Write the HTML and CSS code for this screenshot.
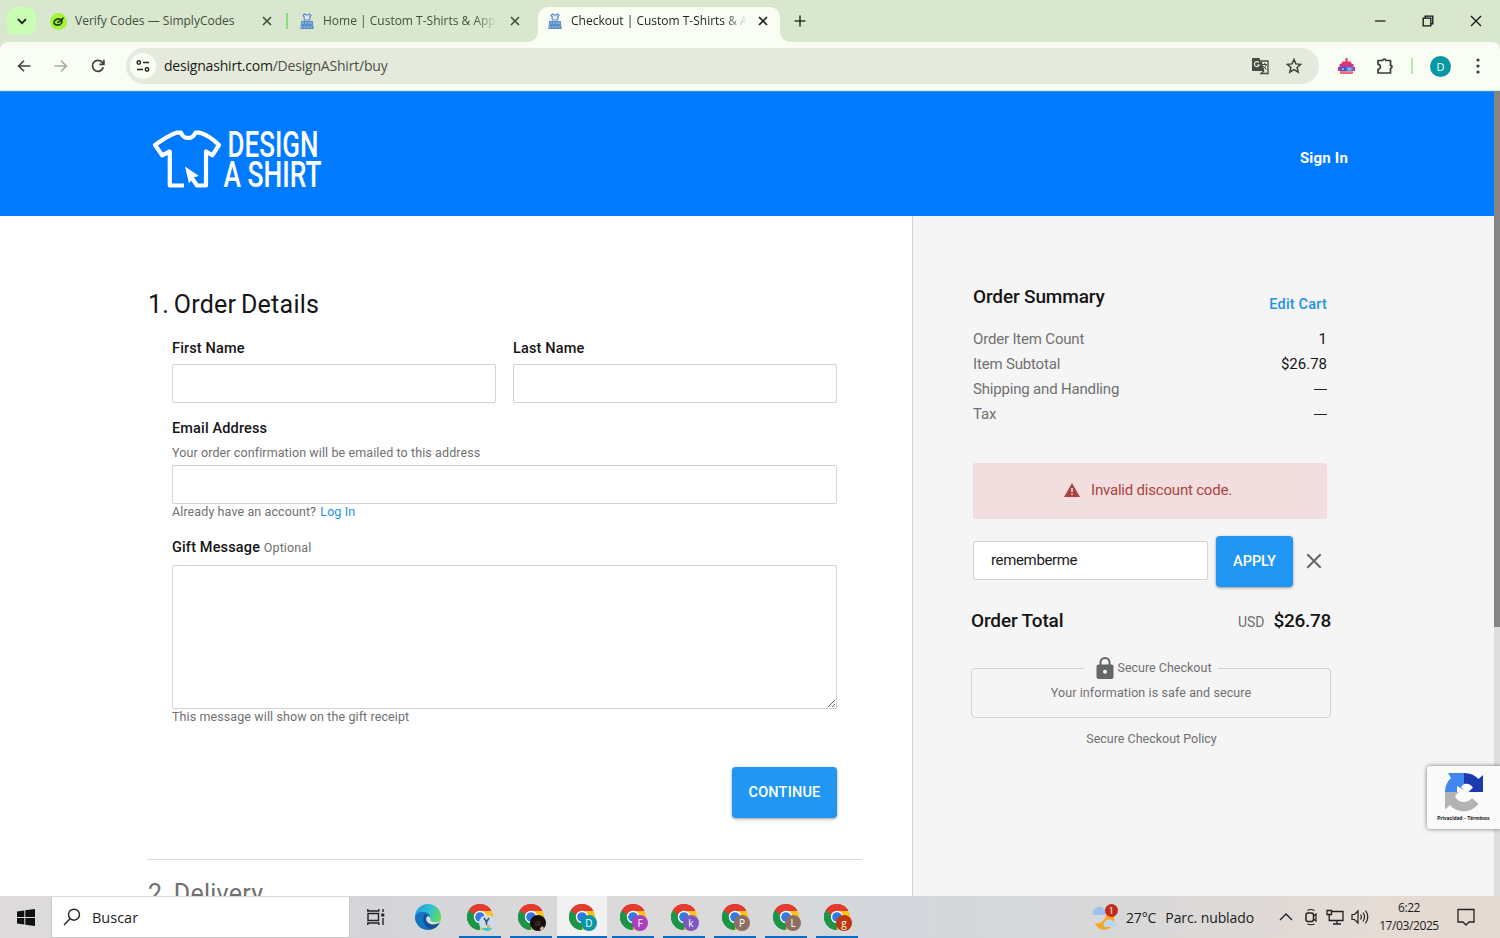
FILE: index.html
```html
<!DOCTYPE html>
<html lang="en">
<head>
    <meta charset="UTF-8">
    <meta name="viewport" content="width=device-width, initial-scale=1.0">
    <title>Checkout | Custom T-Shirts &amp; Apparel</title>
    <link rel="stylesheet" href="styles.css">
</head>
<body>
    <!-- Shared icons -->
    <svg class="sprite" aria-hidden="true">
        <symbol id="close" viewBox="0 0 10 10"><path d="M1 1l8 8M9 1L1 9" fill="none" stroke="currentColor" stroke-width="1.7"/></symbol>
        <symbol id="shirt-fav" viewBox="0 0 14 16">
            <path d="M4.500 1L3 2.500l1.200 1.300V7h5.600V3.800L11 2.500 9.500 1 8 1.800H6z" fill="#dce9ef" stroke="#5b8fc9" stroke-width="1.200"/>
            <path d="M1 8h12v3l.8 5H.2L1 11z" fill="#5b8fc9"/>
            <path d="M3 9v2M6 9v2M9 9v2M11 9v2M2 13v2M5 13v2M8 13v2M11 13v2" stroke="#b9d2e6" stroke-width=".8"/>
        </symbol>
        <symbol id="chrome" viewBox="0 0 26 26">
            <path d="M13 13L1.740 6.500A13 13 0 0 1 24.260 6.500z" fill="#e33b2e"/>
            <path d="M13 13L24.260 6.500A13 13 0 0 1 13 26z" fill="#fcc31e"/>
            <path d="M13 13V26A13 13 0 0 1 1.740 6.500z" fill="#1e9447"/>
            <path d="M13 7h11.500L18 15z" fill="#fcc31e"/>
            <path d="M1.740 6.500L7.800 16l5-9z" fill="#1e9447"/>
            <path d="M1.740 6.500A13 13 0 0 1 24.300 6.700H13a6 6 0 0 0-5.500 4z" fill="#e33b2e"/>
            <path d="M1.740 6.500L7.400 15.500A6 6 0 0 0 15 18.500L11.500 25.900A13 13 0 0 1 1.740 6.500z" fill="#1e9447"/>
            <circle cx="13" cy="13" r="6.200" fill="#fff"/>
            <circle cx="13" cy="13" r="4.800" fill="#3478e5"/>
        </symbol>
    </svg>

    <!-- Browser tabs -->
    <div class="tab-strip">
        <div class="tab-search"><svg width="10" height="7" viewBox="0 0 10 7"><path d="M1 1.200l4 4 4-4" fill="none" stroke="#15240f" stroke-width="1.900"/></svg></div>
        <div class="tab tab-first">
            <svg class="favicon" width="17" height="17" viewBox="0 0 17 17"><circle cx="8.500" cy="8.500" r="8.500" fill="#a5f23a"/><ellipse cx="8" cy="9" rx="4" ry="3" transform="rotate(-15 8 9)" fill="none" stroke="#1c3b12" stroke-width="1.700"/><path d="M7 9.500q3-.5 6.500-5" fill="none" stroke="#1c3b12" stroke-width="1.700"/></svg>
            <span class="tab-title">Verify Codes — SimplyCodes</span>
            <svg class="tab-close" width="10" height="10"><use href="#close"/></svg>
        </div>
        <div class="tab tab-second">
            <svg class="favicon" width="14" height="16"><use href="#shirt-fav"/></svg>
            <span class="tab-title fade">Home | Custom T-Shirts &amp; App</span>
            <svg class="tab-close" width="10" height="10"><use href="#close"/></svg>
        </div>
        <div class="tab tab-active">
            <svg class="favicon" width="14" height="16"><use href="#shirt-fav"/></svg>
            <span class="tab-title fade">Checkout | Custom T-Shirts &amp; A</span>
            <svg class="tab-close" width="10" height="10"><use href="#close"/></svg>
        </div>
        <svg class="new-tab" width="12" height="12" viewBox="0 0 12 12"><path d="M6 .5v11M.5 6h11" stroke="#2b3b27" stroke-width="1.600"/></svg>
        <div class="window-buttons">
            <svg width="12" height="12" viewBox="0 0 12 12"><path d="M1 6h10.500" stroke="#111" stroke-width="1.200"/></svg>
            <svg width="12" height="12" viewBox="0 0 12 12"><path d="M1.200 3.200h7.600v7.600H1.200zM3.200 3V1.200h7.600v7.600H9" fill="none" stroke="#111" stroke-width="1.300"/></svg>
            <svg width="12" height="12" viewBox="0 0 12 12"><path d="M1 1l10 10M11 1L1 11" stroke="#111" stroke-width="1.200"/></svg>
        </div>
    </div>

    <!-- Toolbar -->
    <div class="toolbar">
        <div class="nav-buttons">
            <svg width="14" height="12" viewBox="0 0 14 12"><path d="M13.500 6H1.500M7 .7L1.600 6 7 11.300" fill="none" stroke="#3b4538" stroke-width="1.600"/></svg>
            <svg width="14" height="12" viewBox="0 0 14 12"><path d="M.5 6h12M7 .7L12.400 6 7 11.300" fill="none" stroke="#a6aca2" stroke-width="1.600"/></svg>
            <svg width="14" height="14" viewBox="0 0 14 14"><path d="M12.300 8.300A5.500 5.500 0 1 1 11.300 3.400L12.500 5M12.900 .8v4.500H8.400" fill="none" stroke="#3b4538" stroke-width="1.700"/></svg>
        </div>
        <div class="address-bar">
            <span class="site-info"><svg width="14" height="14" viewBox="0 0 14 14"><path d="M7 3.500h6M1 10.500h6" stroke="#222b20" stroke-width="1.600"/><circle cx="2.800" cy="3.500" r="1.700" fill="none" stroke="#222b20" stroke-width="1.500"/><circle cx="11" cy="10.500" r="1.700" fill="none" stroke="#222b20" stroke-width="1.500"/></svg></span>
            <span class="url"><b>designashirt.com</b>/DesignAShirt/buy</span>
            <svg class="translate" width="18" height="18" viewBox="0 0 18 18"><path d="M1 1h7.500l4.200 13H1z" fill="#454d43"/><path d="M10 4h7v12.500h-7l2.700-2.500z" fill="none" stroke="#454d43" stroke-width="1.300"/><path d="M11 7.500h5M13.500 6v1.500M15 8c-.5 2-1.500 3-3 4M12.200 9l3.500 4" fill="none" stroke="#454d43"/><path d="M7.800 5.500A2.500 2.500 0 1 0 8.200 8H6" fill="none" stroke="#e5eadd" stroke-width="1.200"/></svg>
            <svg class="star" width="16" height="16" viewBox="0 0 16 16"><path d="M8 1.500l1.900 4.400 4.800.4-3.600 3.200 1.100 4.700L8 11.700l-4.200 2.500 1.100-4.700L1.300 6.300l4.800-.4z" fill="none" stroke="#3b4538" stroke-width="1.500"/></svg>
        </div>
        <svg class="ext-bot" width="17" height="17" viewBox="0 0 17 17"><path d="M8.500 0v4" stroke="#e8306b" stroke-width="2"/><path d="M3 6l1.500-2.500h8L14 6z" fill="#e8306b"/><path d="M1.500 6h14v3H17v4H0V9h1.500z" fill="#c4388c"/><path d="M2.500 9h6v4.500h-6z" fill="#3558d0"/><path d="M8.500 9h6v4.500h-6z" fill="#5a8fe8"/><path d="M2 13.500h13V16H2z" fill="#ee6a6f"/><path d="M4 11h2M10.500 11h2" stroke="#fff" stroke-width="1.200"/></svg>
        <svg class="ext-puzzle" width="18" height="18" viewBox="0 0 18 18"><path d="M2 3.500h4.800c0-2 3-2 3 0h4.700v4.800c2 0 2 3 0 3v4.700H2v-3.700c3.200-.3 3.200-4.700 0-5z" fill="none" stroke="#34402f" stroke-width="1.700" stroke-linejoin="round"/></svg>
        <span class="toolbar-divider"></span>
        <span class="profile">D</span>
        <svg class="menu-dots" width="4" height="16" viewBox="0 0 4 16"><g fill="#34402f"><circle cx="2" cy="2" r="1.600"/><circle cx="2" cy="8" r="1.600"/><circle cx="2" cy="14" r="1.600"/></g></svg>
    </div>

    <!-- Page -->
    <div class="page">
        <header class="site-header">
            <svg class="logo" width="170" height="62" viewBox="0 0 170 62">
                <path d="M32 57.500H17.800V23.500L10.200 27.300 3 17C10 12 18 6.500 24.500 4.700h4.500c2.700 7 11.700 7 14.400 0H48C54.500 6.500 61.500 11.500 67 17L60.300 27.300 54 23.500V57.500H45L37 46" fill="none" stroke="#fff" stroke-width="4.200" stroke-linejoin="round"/>
                <path d="M33 38.500l14 9.500-6 1.500-4 6z" fill="#fff"/>
                <text x="75.500" y="28.700" font-size="36" textLength="91" lengthAdjust="spacingAndGlyphs">DESIGN</text>
                <text x="71.500" y="59" font-size="36" textLength="98" lengthAdjust="spacingAndGlyphs">A SHIRT</text>
            </svg>
            <a class="sign-in">Sign In</a>
        </header>

        <div class="columns">
            <main class="checkout">
                <h2>1. Order Details</h2>
                <div class="form">
                    <div class="name-row">
                        <div>
                            <label for="first">First Name</label>
                            <input type="text" id="first">
                        </div>
                        <div>
                            <label for="last">Last Name</label>
                            <input type="text" id="last">
                        </div>
                    </div>
                    <label class="email-label" for="email">Email Address</label>
                    <p class="help help-above">Your order confirmation will be emailed to this address</p>
                    <input type="text" id="email">
                    <p class="help help-below">Already have an account? <a>Log In</a></p>
                    <label class="gift-label" for="gift">Gift Message <small>Optional</small></label>
                    <textarea id="gift"></textarea>
                    <p class="help help-below">This message will show on the gift receipt</p>
                    <button class="btn btn-continue">CONTINUE</button>
                </div>
                <hr>
                <h2 class="next-step">2. Delivery</h2>
            </main>

            <aside class="summary">
                <div class="summary-head">
                    <h3>Order Summary</h3>
                    <a>Edit Cart</a>
                </div>
                <dl>
                    <div><dt>Order Item Count</dt><dd>1</dd></div>
                    <div><dt>Item Subtotal</dt><dd>$26.78</dd></div>
                    <div><dt>Shipping and Handling</dt><dd><i class="dash"></i></dd></div>
                    <div><dt>Tax</dt><dd><i class="dash"></i></dd></div>
                </dl>
                <div class="alert">
                    <svg width="16" height="14" viewBox="0 0 16 14"><path d="M8 0l8 14H0z" fill="#a94442"/><path d="M8 5v4M8 10.500v1.500" stroke="#f2dede" stroke-width="1.600"/></svg>
                    <span>Invalid discount code.</span>
                </div>
                <div class="discount">
                    <input type="text" value="rememberme" aria-label="Discount code">
                    <button class="btn btn-apply">APPLY</button>
                    <svg width="16" height="16" viewBox="0 0 16 16"><path d="M1.300 1.300l13.400 13.400M14.700 1.300L1.300 14.700" stroke="#666" stroke-width="2"/></svg>
                </div>
                <div class="total">
                    <h3>Order Total</h3>
                    <span class="currency">USD</span>
                    <strong>$26.78</strong>
                </div>
                <div class="secure">
                    <div class="secure-title">
                        <svg width="18" height="22" viewBox="0 0 18 22"><path d="M4.500 9V5.500a4.500 4.500 0 0 1 9 0V9" fill="none" stroke="#666" stroke-width="2"/><rect x=".5" y="7.500" width="17" height="14.500" rx="2" fill="#666"/><circle cx="9" cy="14.700" r="2" fill="#f5f5f5"/></svg>
                        <span>Secure Checkout</span>
                    </div>
                    <p>Your information is safe and secure</p>
                </div>
                <a class="policy">Secure Checkout Policy</a>
            </aside>
        </div>

        <div class="scrollbar"><span></span></div>

        <div class="recaptcha">
            <svg width="40" height="40" viewBox="0 0 40 40">
                <path d="M1 20A19 19 0 0 1 7 6L4 1H20V12L17 15L20 18L13 14V20z" fill="#4286f0"/>
                <path d="M20 1C26 1 31 3 34.500 7L39 3V20H24.500L29 15.500C27 12.500 24 11 20 12z" fill="#1b3aad"/>
                <path d="M1 20H14.500L11 24.500C14 31 23 32 28 26L34.500 32C26 42 13 41 6 33L1 37.500z" fill="#b3b3b3"/>
            </svg>
            <span>Privacidad - Términos</span>
        </div>
    </div>

    <!-- Taskbar -->
    <div class="taskbar">
        <div class="start"><svg width="18" height="17" viewBox="0 0 18 17"><path d="M0 2.400l7.300-1V8H0zM8.300 1.200L18 0v8H8.300zM0 9h7.300v6.600l-7.300-1zM8.300 9H18v8l-9.700-1.300z" fill="#111"/></svg></div>
        <div class="search">
            <svg width="18" height="18" viewBox="0 0 18 18"><circle cx="11" cy="6.700" r="5.500" fill="none" stroke="#222" stroke-width="1.400"/><path d="M7 10.800L1 17" stroke="#222" stroke-width="1.400"/></svg>
            <span>Buscar</span>
        </div>
        <div class="task-view"><svg width="18" height="16" viewBox="0 0 18 16"><path d="M1 4.500h10.500v7H1zM.8 0v2h11V0M.8 16v-2h11v2M16 0v3M16 9v7" fill="none" stroke="#222" stroke-width="1.400"/><path d="M14.300 4.500h3v3h-3z" fill="#222"/></svg></div>
        <div class="apps">
            <div class="app edge">
                <svg width="26" height="26" viewBox="0 0 26 26">
                    <defs>
                        <linearGradient id="edge-top" x1="0" x2="1" y1="0" y2=".4"><stop offset="0" stop-color="#2295dc"/><stop offset=".55" stop-color="#2cbfd5"/><stop offset="1" stop-color="#62d85b"/></linearGradient>
                    </defs>
                    <circle cx="13" cy="13" r="13" fill="url(#edge-top)"/>
                    <path d="M0 13C1 8.500 5.500 7.500 9 8C13 8.600 15.500 11 15.300 14C13 10.500 9.500 14.500 12 18C14.500 21.500 20 21.500 24.500 19A13 13 0 0 1 0 13z" fill="#1673c0"/>
                    <path d="M9.500 10.500C6.500 17 10 24.500 17 25.300A13 13 0 0 0 24.500 19C20 21.500 14.500 21 12 18C10 15.500 10.500 12.500 13 11.800C12 10.500 10.500 10 9.500 10.500z" fill="#164f97"/>
                    <path d="M13 12C10.500 13.500 11 17 13.500 18.700C17 21 21 20.500 24.500 18.500L25 17.300C21 18.800 17.500 18.300 15.500 16.500C16 14.500 15 12.500 13 12z" fill="#dedcdb"/>
                </svg>
            </div>
            <div class="app open"><svg width="26" height="26"><use href="#chrome"/></svg><span class="badge photo-light"><svg width="16" height="16" viewBox="0 0 16 16"><path d="M5 3l2.500 4L10 3M7.500 7v3" fill="none" stroke="#35516b" stroke-width="1.500"/><path d="M2 13h11l-2 3H5z" fill="#43c7c6"/><path d="M8 10h3v3H8z" fill="#d6b56c"/></svg></span></div>
            <div class="app open"><svg width="26" height="26"><use href="#chrome"/></svg><span class="badge photo-dark"><svg width="16" height="16" viewBox="0 0 16 16"><path d="M5 7q3-3 6 0v4H5z" fill="#3a211b"/><path d="M10 13l3-2 1 3-3 2z" fill="#e8bba8"/></svg></span></div>
            <div class="app open current"><svg width="26" height="26"><use href="#chrome"/></svg><span class="badge teal">D</span></div>
            <div class="app open"><svg width="26" height="26"><use href="#chrome"/></svg><span class="badge magenta">F</span></div>
            <div class="app open"><svg width="26" height="26"><use href="#chrome"/></svg><span class="badge violet">k</span></div>
            <div class="app open"><svg width="26" height="26"><use href="#chrome"/></svg><span class="badge brown">P</span></div>
            <div class="app open"><svg width="26" height="26"><use href="#chrome"/></svg><span class="badge brown">L</span></div>
            <div class="app open"><svg width="26" height="26"><use href="#chrome"/></svg><span class="badge rust">g</span></div>
        </div>
        <div class="tray">
            <div class="weather">
                <svg width="26" height="25" viewBox="0 0 26 25"><path d="M15 5a10 10 0 1 1-12 13c5 2 12-3 12-13z" fill="#f5a623"/><path d="M2 10a3 3 0 0 1 1-5.500 5 5 0 0 1 9-.5 3 3 0 0 1 1 6z" fill="#9fc1ee"/><path d="M13 22a3 3 0 0 1 .5-5.500 5 5 0 0 1 8.500.5 2.600 2.600 0 0 1 1 5z" fill="#bcd6f5"/></svg>
                <span class="alert-count">1</span>
            </div>
            <span class="temp">27°C</span>
            <span class="condition">Parc. nublado</span>
            <svg class="chevron" width="14" height="8" viewBox="0 0 14 8"><path d="M1 7l6-6 6 6" fill="none" stroke="#222" stroke-width="1.400"/></svg>
            <svg class="meet" width="12" height="18" viewBox="0 0 12 18"><rect x="1" y="5" width="7.500" height="8.500" rx="2" fill="none" stroke="#222" stroke-width="1.500"/><path d="M8.500 8l2.500-2v7l-2.500-2M2.500 2.500q3.500-2 7 0M2.500 16q3.500 1.500 7 0" fill="none" stroke="#222" stroke-width="1.200"/></svg>
            <svg class="network" width="18" height="16" viewBox="0 0 18 16"><path d="M6 2.500h11v9H5.500M11 11.500V15M7 15h8" fill="none" stroke="#222" stroke-width="1.300"/><path d="M1 1.500h4.500v4H1zM3.200 5.500V11.500H6" fill="none" stroke="#222" stroke-width="1.300"/></svg>
            <svg class="volume" width="18" height="16" viewBox="0 0 18 16"><path d="M1 5.500h2.500L7 2v12l-3.500-3.500H1zM9.500 5.500q1.800 2.500 0 5M12 3.500q3 4.500 0 9M14.500 1.500q4.500 6.500 0 13" fill="none" stroke="#222" stroke-width="1.200"/></svg>
            <div class="clock"><span>6:22</span><span>17/03/2025</span></div>
            <svg class="notifications" width="18" height="18" viewBox="0 0 18 18"><path d="M1 1.500h16v12.500h-5L9 17l-3-3H1z" fill="none" stroke="#222" stroke-width="1.300"/></svg>
        </div>
    </div>
</body>
</html>
```

FILE: styles.css
```css
:root {
    --strip: #d8e7ce;
    --toolbar: #f9fdf4;
    --brand: #007bff;
    --accent: #2196f3;
    --link: #1e92ea;
    --grey-text: #707070;
    --border: #d3d3d3;
    --panel: #f5f5f5;
    --ui-font: "Open Sans", "Noto Sans", sans-serif;
}

* {
    box-sizing: border-box;
}

body {
    margin: 0;
    height: 938px;
    overflow: hidden;
    display: flex;
    flex-direction: column;
    font-family: Roboto, sans-serif;
    color: #151515;
    background: #fff;
}

svg {
    display: block;
    flex: none;
}

h2, h3, p, dl, dd {
    margin: 0;
}

.sprite {
    position: absolute;
    width: 0;
    height: 0;
}

/* Browser tabs */
.tab-strip {
    height: 42px;
    flex: none;
    display: flex;
    align-items: center;
    padding-left: 7px;
    background: var(--strip);
    font-family: var(--ui-font);
    font-size: 12px;
    color: #42503d;
}

.tab-search {
    width: 29px;
    height: 29px;
    border-radius: 9px;
    background: #c8ffb4;
    display: flex;
    align-items: center;
    justify-content: center;
}

.tab {
    display: flex;
    align-items: center;
    height: 34px;
    white-space: nowrap;
}

.tab-title {
    line-height: 34px;
}

.tab-close {
    margin-left: auto;
}

.fade {
    -webkit-mask-image: linear-gradient(to right, #000 87%, transparent);
    mask-image: linear-gradient(to right, #000 87%, transparent);
}

.tab-first {
    width: 222px;
    margin-left: 14px;
    gap: 8px;
}

.tab-second {
    width: 234px;
    margin-left: 14px;
    padding-left: 14px;
    background: linear-gradient(#8fdc87, #8fdc87) left center / 2px 16px no-repeat;
}

.tab-second .tab-title {
    width: 174px;
    margin-left: 9px;
}

.tab-active {
    position: relative;
    width: 242px;
    height: 35px;
    align-self: flex-end;
    margin-left: 18px;
    padding: 0 12px 7px 10px;
    border-radius: 10px 10px 0 0;
    background: var(--toolbar);
    color: #1c241a;
}

.tab-active::before,
.tab-active::after {
    content: "";
    position: absolute;
    bottom: 0;
    width: 10px;
    height: 10px;
}

.tab-active::before {
    left: -10px;
    background: radial-gradient(circle at 0 0, transparent 9.500px, var(--toolbar) 10px);
}

.tab-active::after {
    right: -10px;
    background: radial-gradient(circle at 100% 0, transparent 9.500px, var(--toolbar) 10px);
}

.tab-active .tab-title {
    width: 176px;
    margin-left: 9px;
}

.new-tab {
    margin-left: 14px;
}

.window-buttons {
    margin-left: auto;
    margin-right: 18px;
    display: flex;
    gap: 36px;
}

/* Toolbar */
.toolbar {
    height: 49px;
    flex: none;
    display: flex;
    align-items: center;
    padding: 0 20px 0 17px;
    background: var(--toolbar);
    border-bottom: 1px solid #c6eaf5;
    font-family: var(--ui-font);
    box-shadow: 0 -8px 0 var(--strip);
    border-radius: 8px 8px 0 0;
}

.nav-buttons {
    display: flex;
    align-items: center;
    gap: 23px;
}

.address-bar {
    width: 1193px;
    height: 36px;
    margin-left: 21px;
    padding: 0 17px 0 4px;
    border-radius: 18px;
    background: #e5eadd;
    display: flex;
    align-items: center;
}

.site-info {
    width: 26px;
    height: 26px;
    border-radius: 50%;
    background: #f9fdf4;
    display: flex;
    align-items: center;
    justify-content: center;
}

.url {
    margin-left: 8px;
    padding-bottom: 1px;
    font-size: 14px;
    letter-spacing: -0.2px;
    color: #4b5148;
}

.url b {
    font-weight: 400;
    color: #171d15;
}

.translate {
    margin-left: auto;
}

.star {
    margin-left: 17px;
}

.ext-bot {
    margin-left: 19px;
}

.ext-puzzle {
    margin-left: 21px;
}

.toolbar-divider {
    width: 2px;
    height: 16px;
    margin-left: 17px;
    background: #b9eaaa;
}

.profile {
    width: 21px;
    height: 21px;
    margin-left: 17px;
    border-radius: 50%;
    background: #0797a5;
    color: #fff;
    font-size: 11px;
    line-height: 21px;
    text-align: center;
}

.menu-dots {
    margin-left: auto;
}

/* Page */
.page {
    position: relative;
    height: 805px;
    flex: none;
    overflow: hidden;
}

.site-header {
    height: 125px;
    display: flex;
    align-items: center;
    justify-content: space-between;
    padding: 7px 152px 0 152px;
    background: var(--brand);
    border-top: 1px solid #3f8fd9;
}

.logo {
    margin-top: 2px;
    overflow: visible;
}

.logo text {
    fill: #fff;
    font-family: Roboto, sans-serif;
    font-weight: 500;
}

.sign-in {
    color: #fff;
    font-size: 15px;
    font-weight: 700;
    letter-spacing: 0.2px;
}

.columns {
    display: flex;
    height: 680px;
}

.checkout {
    width: 913px;
    padding: 74px 50px 0 147px;
    border-right: 1px solid var(--border);
}

.checkout h2 {
    font-size: 25px;
    font-weight: 400;
    line-height: 30px;
    letter-spacing: 0.25px;
    word-spacing: -1.800px;
    padding-left: 1px;
}

.form {
    width: 690px;
    padding: 18px 0 0 25px;
    display: flex;
    flex-direction: column;
}

.name-row {
    display: grid;
    grid-template-columns: 1fr 1fr;
    gap: 17px;
}

label {
    display: block;
    font-size: 14.500px;
    font-weight: 500;
    line-height: 22px;
    letter-spacing: 0.15px;
}

label small {
    font-size: 12.500px;
    font-weight: 400;
    letter-spacing: 0.1px;
    color: var(--grey-text);
}

input,
textarea {
    display: block;
    width: 100%;
    height: 39px;
    border: 1px solid var(--border);
    border-radius: 2px;
    background: #fff;
    font: 15px Roboto, sans-serif;
    color: #222;
}

.name-row input {
    margin-top: 4px;
}

.email-label {
    margin-top: 15px;
}

.help {
    font-size: 12.500px;
    line-height: 17px;
    letter-spacing: 0.1px;
    color: var(--grey-text);
}

.help a {
    margin-left: 1px;
    color: var(--link);
}

.help-above {
    margin: 4px 0 4px;
}

.help-below {
    margin-top: -1px;
}

.gift-label {
    margin-top: 17px;
}

textarea {
    height: 144px;
    margin-top: 6px;
}

.btn {
    height: 51px;
    border: 0;
    border-radius: 4px;
    background: var(--accent);
    box-shadow: 0 1px 3px rgba(0, 0, 0, 0.4);
    color: #fff;
    font: 500 14.500px Roboto, sans-serif;
    padding: 0;
}

.btn-continue {
    width: 105px;
    margin-top: 42px;
    align-self: flex-end;
    letter-spacing: 0.2px;
}

hr {
    width: 715px;
    height: 1px;
    margin: 41px 0 0;
    border: 0;
    background: #dadada;
}

.checkout .next-step {
    margin-top: 19px;
    color: var(--grey-text);
}

/* Order summary */
.summary {
    flex: 1;
    padding: 69px 173px 0 60px;
    background: var(--panel);
    display: flex;
    flex-direction: column;
}

.summary-head {
    display: flex;
    justify-content: space-between;
}

.summary h3 {
    font-size: 19px;
    font-weight: 500;
    line-height: 24px;
    letter-spacing: -0.15px;
}

.summary-head a {
    margin-top: 8px;
    font-size: 14.500px;
    font-weight: 500;
    line-height: 24px;
    letter-spacing: 0.2px;
    color: var(--link);
}

dl {
    margin-top: 10px;
    font-size: 15px;
    line-height: 25px;
}

dl div {
    display: flex;
    align-items: center;
    justify-content: space-between;
}

dt {
    color: var(--grey-text);
    letter-spacing: -0.18px;
}

.dash {
    display: block;
    width: 13px;
    height: 1px;
    background: #222;
}

.alert {
    height: 56px;
    margin-top: 36px;
    padding-right: 4px;
    padding-bottom: 2px;
    background: #f2dede;
    border-radius: 2px;
    color: #a94442;
    font-size: 15px;
    letter-spacing: -0.2px;
    display: flex;
    align-items: center;
    justify-content: center;
    gap: 11px;
}

.discount {
    display: flex;
    align-items: center;
    margin-top: 17px;
}

.discount input {
    width: 235px;
    padding: 0 17px;
    margin-bottom: 3px;
    letter-spacing: -0.35px;
}

.btn-apply {
    width: 77px;
    margin-left: 8px;
    letter-spacing: -0.05px;
}

.discount svg {
    margin-left: 13px;
    margin-bottom: 1px;
}

.total {
    display: flex;
    align-items: baseline;
    margin: 22px -4px 0 -2px;
}

.currency {
    margin-left: auto;
    color: var(--grey-text);
    font-size: 14px;
}

.total strong {
    margin-left: 9px;
    font-size: 19px;
    font-weight: 500;
    letter-spacing: -0.3px;
}

.secure {
    height: 50px;
    margin: 35px -4px 0 -2px;
    border: 1px solid var(--border);
    border-radius: 4px;
    display: flex;
    flex-direction: column;
    align-items: center;
    font-size: 12.500px;
    letter-spacing: 0.1px;
    color: var(--grey-text);
}

.secure-title {
    height: 24px;
    margin-top: -13px;
    padding: 0 7px 0 12px;
    background: var(--panel);
    display: flex;
    align-items: center;
    gap: 4px;
}

.secure-title span {
    padding-bottom: 2px;
    letter-spacing: 0;
}

.secure p {
    margin-top: 4px;
    line-height: 18px;
}

.policy {
    margin-top: 12px;
    padding-left: 3px;
    font-size: 12.500px;
    line-height: 18px;
    text-align: center;
    color: var(--grey-text);
}

.scrollbar {
    position: absolute;
    top: 0;
    right: 0;
    width: 6px;
    height: 100%;
    background: #dedede;
}

.scrollbar span {
    display: block;
    height: 536px;
    background: #858585;
}

.recaptcha {
    position: absolute;
    top: 675px;
    right: 0;
    width: 73px;
    height: 63px;
    border-radius: 3px 0 0 3px;
    background: #fafafa;
    box-shadow: 0 0 4px rgba(0, 0, 0, 0.55);
    display: flex;
    flex-direction: column;
    align-items: center;
    padding-top: 6px;
}

.recaptcha span {
    margin-top: 3px;
    font-size: 5px;
    line-height: 7px;
    font-weight: 700;
    letter-spacing: 0.15px;
    white-space: nowrap;
}

/* Taskbar */
.taskbar {
    height: 42px;
    flex: none;
    display: flex;
    align-items: center;
    background: linear-gradient(90deg, #dedbdb 0, #d4d5d9 25%, #dcdad9 45%, #d3d7dc 58%, #d8d8d9 74%, #e4dbd4 92%, #e4dad2);
    font-family: var(--ui-font);
    color: #1c1c1c;
}

.start {
    width: 51px;
    padding-left: 17px;
}

.search {
    width: 299px;
    height: 41px;
    padding-left: 11px;
    background: #fff;
    border: 1px solid #c9c9c9;
    border-top: 0;
    display: flex;
    align-items: center;
    gap: 11px;
    font-size: 14.500px;
}

.search span {
    padding-top: 1px;
}

.task-view {
    width: 54px;
    padding-left: 17px;
}

.apps {
    display: flex;
    gap: 1px;
    height: 42px;
}

.app {
    position: relative;
    width: 50px;
    padding: 8px 0 0 12px;
}

.edge {
    padding-left: 11px;
}

.open::after {
    content: "";
    position: absolute;
    left: 4px;
    bottom: 0;
    width: 42px;
    height: 2px;
    background: #0a6cc4;
}

.current {
    background: #f1f1f2;
}

.current::after {
    left: 0;
    width: 50px;
}

.badge {
    position: absolute;
    left: 24px;
    top: 19px;
    width: 16px;
    height: 16px;
    border-radius: 50%;
    overflow: hidden;
    color: #fff;
    font-size: 10px;
    line-height: 16px;
    text-align: center;
}

.photo-light { background: #cddbe8; }
.photo-dark { background: #15100f; }
.teal { background: #0797a5; }
.magenta { background: #ab3fbc; }
.violet { background: #7e57c2; }
.brown { background: #8d6e63; }
.rust { background: #bf360c; }

.tray {
    margin-left: auto;
    display: flex;
    align-items: center;
    padding-right: 25px;
    font-size: 14px;
    letter-spacing: -0.1px;
    white-space: nowrap;
}

.weather {
    position: relative;
}

.alert-count {
    position: absolute;
    right: 0;
    top: -1px;
    width: 13px;
    height: 13px;
    border-radius: 50%;
    background: #c42b1c;
    color: #fff;
    font-size: 9px;
    line-height: 13px;
    text-align: center;
}

.temp {
    margin-left: 8px;
}

.condition {
    margin-left: 9px;
}

.chevron { margin-left: 25px; }
.meet { margin-left: 12px; }
.network { margin-left: 9px; }
.volume { margin-left: 7px; }

.clock {
    width: 60px;
    margin-left: 10px;
    display: flex;
    flex-direction: column;
    align-items: center;
    font-size: 12px;
    line-height: 18px;
    letter-spacing: -0.4px;
}

.notifications {
    margin-left: 18px;
}
```
